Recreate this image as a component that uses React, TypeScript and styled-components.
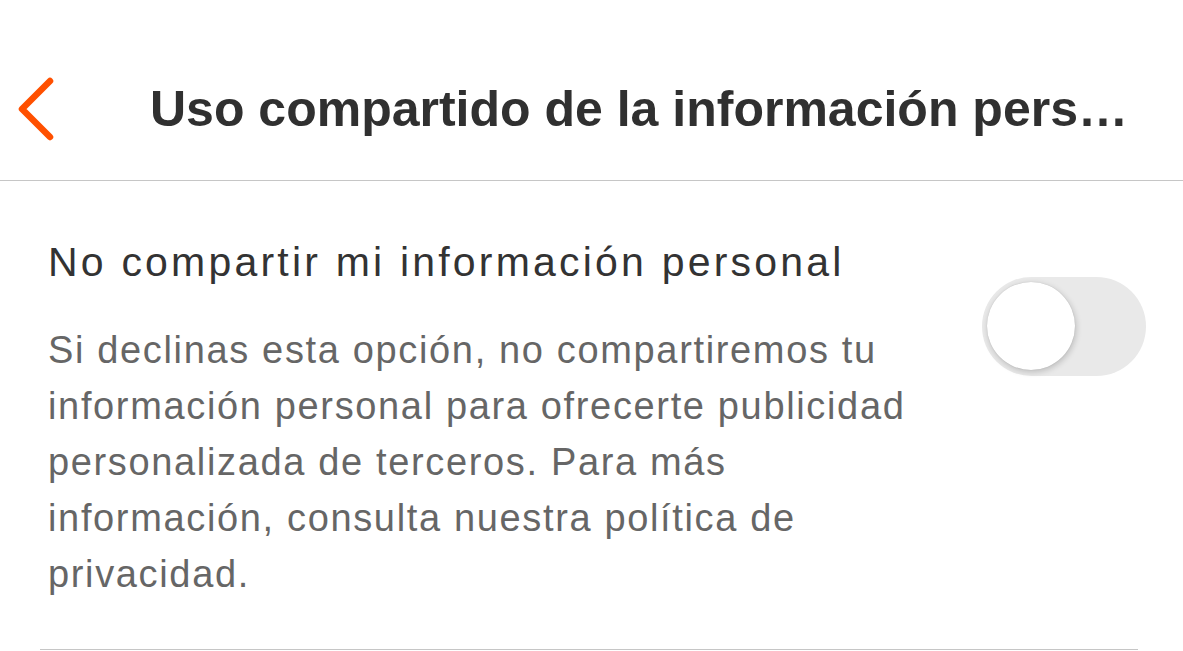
import styled, { createGlobalStyle } from 'styled-components';

const GlobalStyle = createGlobalStyle`
  html, body {
    margin: 0;
    padding: 0;
    background: #ffffff;
  }
  body {
    font-family: "Liberation Sans", Arial, Helvetica, sans-serif;
  }
`;

const Page = styled.div`
  width: 1183px;
  height: 651px;
  overflow: hidden;
  display: flex;
  flex-direction: column;
  background: #fff;
`;

const Header = styled.header`
  height: 181px;
  flex-shrink: 0;
  display: flex;
  align-items: center;
  padding-top: 38px;
  box-sizing: border-box;
  border-bottom: 1.5px solid #c6c6c6;
`;

const BackButton = styled.button`
  width: 150px;
  height: 80px;
  padding: 0 0 0 16px;
  margin: 0;
  border: none;
  background: transparent;
  display: flex;
  align-items: center;
  flex-shrink: 0;
  cursor: pointer;
`;

const Title = styled.h1`
  margin: 0;
  flex: 1;
  min-width: 0;
  padding-right: 45px;
  font-size: 50px;
  font-weight: 700;
  color: #303030;
  white-space: nowrap;
  overflow: hidden;
  text-overflow: ellipsis;
`;

const Content = styled.main`
  padding: 0 0 0 40px;
  margin-right: 45px;
`;

const Row = styled.section`
  display: flex;
  align-items: flex-start;
  justify-content: space-between;
  padding: 55px 0 47px 8px;
  border-bottom: 1.5px solid #c6c6c6;
`;

const TextBlock = styled.div`
  width: 880px;
`;

const Label = styled.div`
  font-size: 41px;
  line-height: 52px;
  letter-spacing: 3.2px;
  color: #333333;
  margin-bottom: 34px;
`;

const Description = styled.p`
  margin: 0;
  font-size: 38px;
  line-height: 56px;
  letter-spacing: 1.65px;
  color: #666666;
`;

const Toggle = styled.button<{ $on?: boolean }>`
  position: relative;
  width: 164px;
  height: 99px;
  margin: 41px -8px 0 0;
  padding: 0;
  border: none;
  border-radius: 50px;
  background: ${(p) => (p.$on ? '#ff5000' : '#e9e9e9')};
  flex-shrink: 0;
  cursor: pointer;
`;

const Knob = styled.span<{ $on?: boolean }>`
  position: absolute;
  top: 5px;
  left: ${(p) => (p.$on ? '71px' : '5px')};
  width: 88px;
  height: 88px;
  border-radius: 50%;
  background: #fff;
  box-shadow: 1px 2px 6px rgba(0, 0, 0, 0.2), 0 0 1px rgba(0, 0, 0, 0.18);
`;

function BackIcon() {
  return (
    <svg width="40" height="64" viewBox="0 0 40 64" fill="none">
      <path
        d="M34 4 L6 32 L34 60"
        stroke="#ff5000"
        strokeWidth="6.5"
        strokeLinecap="round"
        strokeLinejoin="round"
      />
    </svg>
  );
}

export default function App() {
  return (
    <>
      <GlobalStyle />
      <Page>
        <Header>
          <BackButton aria-label="Volver">
            <BackIcon />
          </BackButton>
          <Title>Uso compartido de la información personal</Title>
        </Header>
        <Content>
          <Row>
            <TextBlock>
              <Label>No compartir mi información personal</Label>
              <Description>
                Si declinas esta opción, no compartiremos tu información personal para ofrecerte
                publicidad personalizada de terceros. Para más información, consulta nuestra
                política de privacidad.
              </Description>
            </TextBlock>
            <Toggle aria-label="No compartir mi información personal">
              <Knob />
            </Toggle>
          </Row>
        </Content>
      </Page>
    </>
  );
}
